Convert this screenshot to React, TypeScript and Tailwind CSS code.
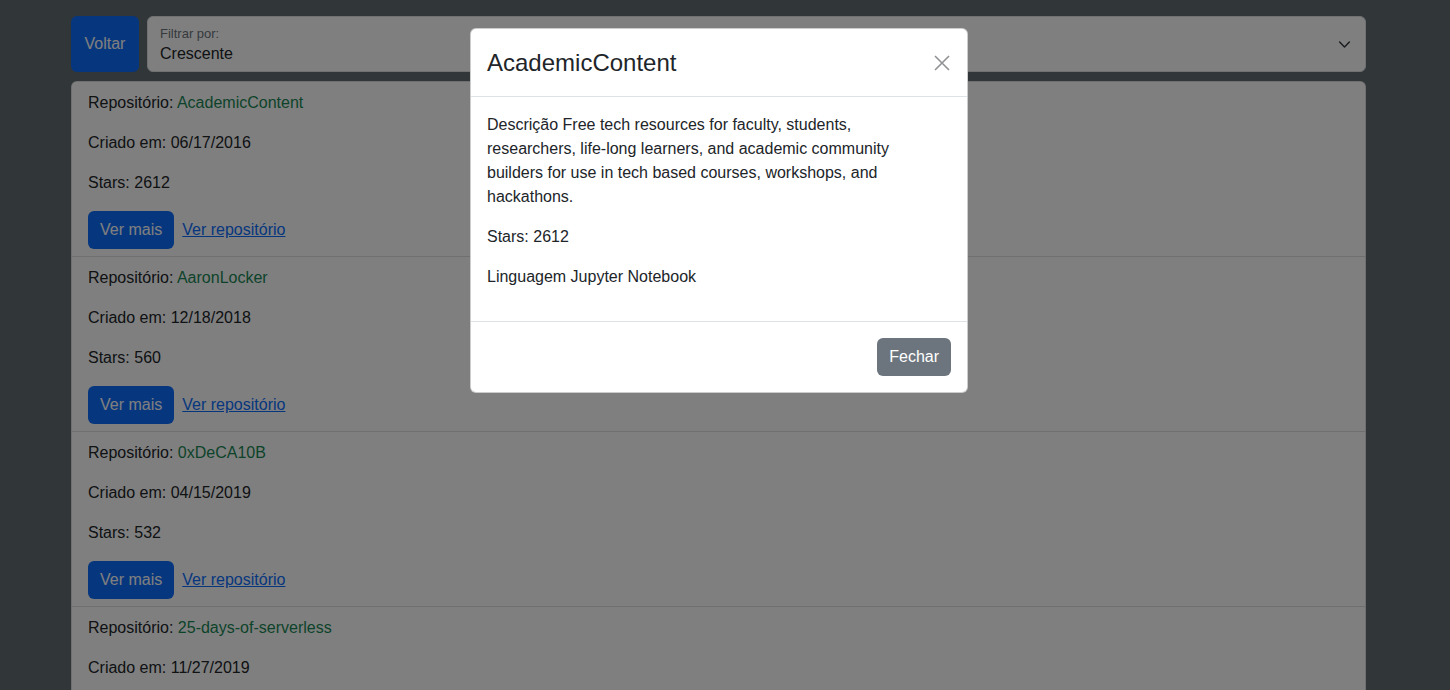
import React from 'react';

type Repo = { name: string; created: string; stars: number };

const repos: Repo[] = [
    { name: 'AcademicContent', created: '06/17/2016', stars: 2612 },
    { name: 'AaronLocker', created: '12/18/2018', stars: 560 },
    { name: '0xDeCA10B', created: '04/15/2019', stars: 532 },
    { name: '25-days-of-serverless', created: '11/27/2019', stars: 512 },
];

const font = { fontFamily: '"Liberation Sans", Arial, sans-serif' };

function RepoItem({ repo, last }: { repo: Repo; last: boolean }) {
    return (
        <div className={`px-4 pt-[9px] pb-[7px] bg-white ${last ? '' : 'border-b border-black/[0.125]'}`}>
            <p className="mb-4 leading-6 text-[#212529]">
                Repositório: <span className="text-[#198754]">{repo.name}</span>
            </p>
            <p className="mb-4 leading-6 text-[#212529]">Criado em: {repo.created}</p>
            <p className="mb-4 leading-6 text-[#212529]">Stars: {repo.stars}</p>
            <div className="flex items-center gap-2">
                <button className="h-[38px] px-3 rounded-md bg-[#0d6efd] text-white">Ver mais</button>
                <a href="#" className="text-[#0d6efd] underline">Ver repositório</a>
            </div>
        </div>
    );
}

export default function App() {
    return (
        <div className="relative h-[690px] w-[1450px] overflow-hidden bg-[#626c72] text-base" style={font}>
            {/* page */}
            <div className="pl-[71px] pt-4 w-[1366px] box-content">
                <div className="flex gap-2 w-[1295px]">
                    <button className="h-14 w-[68px] rounded-md bg-[#0d6efd] text-white">Voltar</button>
                    <div className="flex-1 h-14 rounded-md bg-white border border-[#dee2e6] flex items-center justify-between pl-3 pr-[14px]">
                        <div className="flex flex-col">
                            <span className="text-[13px] leading-4 text-[#6c757d] mt-[2px]">Filtrar por:</span>
                            <span className="leading-5 text-[#212529] mt-[2px]">Crescente</span>
                        </div>
                        <svg width="13" height="13" viewBox="0 0 16 16" fill="none" stroke="#343a40" strokeWidth="1.8" strokeLinecap="round" strokeLinejoin="round" className="mt-[1px]">
                            <path d="M2 5l6 6 6-6" />
                        </svg>
                    </div>
                </div>
                <div className="mt-[9px] w-[1295px] rounded-md border border-black/[0.125] overflow-hidden bg-white">
                    {repos.map((r, i) => (
                        <RepoItem key={r.name} repo={r} last={i === repos.length - 1} />
                    ))}
                </div>
            </div>

            {/* backdrop */}
            <div className="absolute inset-0 bg-black/50" />

            {/* modal */}
            <div className="absolute left-[470px] top-[28px] w-[498px] rounded-md bg-white border border-black/20 text-[#212529]">
                <div className="h-[68px] flex items-center justify-between px-4 border-b border-[#dee2e6]">
                    <h5 className="text-[24px] font-medium leading-7">AcademicContent</h5>
                    <svg width="16" height="16" viewBox="0 0 16 16" stroke="#212529" strokeOpacity="0.5" strokeWidth="1.6" className="mr-[1px]">
                        <path d="M1 1l14 14M15 1L1 15" />
                    </svg>
                </div>
                <div className="p-4">
                    <p className="mb-4 leading-6">
                        Descrição Free tech resources for faculty, students,<br />
                        researchers, life-long learners, and academic community<br />
                        builders for use in tech based courses, workshops, and<br />
                        hackathons.
                    </p>
                    <p className="mb-4 leading-6">Stars: 2612</p>
                    <p className="mb-4 leading-6">Linguagem Jupyter Notebook</p>
                </div>
                <div className="border-t border-[#dee2e6] flex justify-end px-3 py-3">
                    <button className="m-1 h-[38px] px-3 rounded-md bg-[#6c757d] text-white">Fechar</button>
                </div>
            </div>
        </div>
    );
}
